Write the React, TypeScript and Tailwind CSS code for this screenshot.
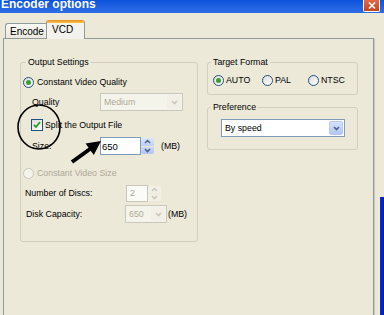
import React from 'react'

const Chevron = ({ color = '#4D6185' }: { color?: string }) => (
  <svg width="7" height="5" viewBox="0 0 7 5">
    <path d="M1 1l2.5 2.5L6 1" fill="none" stroke={color} strokeWidth="1.6" />
  </svg>
)

const ChevronUp = ({ color = '#4D6185' }: { color?: string }) => (
  <svg width="7" height="5" viewBox="0 0 7 5">
    <path d="M1 4l2.5-2.5L6 4" fill="none" stroke={color} strokeWidth="1.5" />
  </svg>
)

const Radio = ({ checked = false, disabled = false }: { checked?: boolean; disabled?: boolean }) => (
  <span
    className={
      disabled
        ? 'flex h-[11px] w-[11px] shrink-0 items-center justify-center rounded-full border border-[#CAC8BB] bg-[#F4F3EC]'
        : 'flex h-[11px] w-[11px] shrink-0 items-center justify-center rounded-full border border-[#1C5180] bg-gradient-to-br from-[#DCDCD7] to-white'
    }
  >
    {checked && <span className="h-[5px] w-[5px] rounded-full bg-[#3CA02E]" />}
  </span>
)

const Combo = ({ value, width, disabled = false }: { value: string; width: string; disabled?: boolean }) => (
  <div
    className={
      disabled
        ? `flex h-[18px] ${width} items-center border border-[#C9C7BA] bg-[#F5F4EA] text-[#ACA899]`
        : `flex h-[18px] ${width} items-center border border-[#7F9DB9] bg-white text-black`
    }
  >
    <span className="flex-1 pl-[3px]">{value}</span>
    <span
      className={
        disabled
          ? 'mr-px flex h-[14px] w-[14px] items-center justify-center rounded-[2px] bg-[#F1EFE6]'
          : 'mr-px flex h-[14px] w-[14px] items-center justify-center rounded-[2px] border border-[#B9CBF3] bg-gradient-to-b from-[#D6E2FD] to-[#B2C6F5]'
      }
    >
      <Chevron color={disabled ? '#C9C7BA' : '#4D6185'} />
    </span>
  </div>
)

const Spin = ({ disabled = false, h }: { disabled?: boolean; h: string }) => (
  <div className={`flex ${h} w-[13px] flex-col gap-px py-px`}>
    <span
      className={
        disabled
          ? 'flex flex-1 items-center justify-center rounded-t-[2px] bg-[#F1EFE6]'
          : 'flex flex-1 items-center justify-center rounded-t-[2px] bg-gradient-to-b from-[#DCE6FD] to-[#BCCEF7]'
      }
    >
      <ChevronUp color={disabled ? '#CAC8BB' : '#4D6185'} />
    </span>
    <span
      className={
        disabled
          ? 'flex flex-1 items-center justify-center rounded-b-[2px] bg-[#F1EFE6]'
          : 'flex flex-1 items-center justify-center rounded-b-[2px] bg-gradient-to-b from-[#CBD9FB] to-[#AFC4F4]'
      }
    >
      <Chevron color={disabled ? '#CAC8BB' : '#4D6185'} />
    </span>
  </div>
)

export default function App() {
  return (
    <div className="relative flex h-[315px] w-[384px] flex-col overflow-hidden bg-[#ECE9D8] font-['Liberation_Sans',Arial,sans-serif] text-[8.8px] leading-[11px] text-black">
      {/* title bar */}
      <div className="flex h-[13px] shrink-0 items-start justify-between bg-gradient-to-b from-[#0A53DA] to-[#2F6DE6]">
        <span className="-mt-[3px] pl-[1px] text-[12px] font-bold leading-[14px] text-white">Encoder options</span>
        <span className="mr-[4px] flex h-[12px] w-[17px] items-center justify-center rounded-b-[2px] border-x border-b border-white bg-gradient-to-b from-[#E06A45] to-[#C8431F]">
          <svg width="8" height="7" viewBox="0 0 8 7">
            <path d="M1 0.5l6 6M7 0.5l-6 6" stroke="white" strokeWidth="1.6" />
          </svg>
        </span>
      </div>

      <div className="flex flex-1">
        <div className="flex-1">
          {/* tabs */}
          <div className="flex items-end pl-[5px] pt-[7px]">
            <div className="flex h-[15px] w-[41px] items-center rounded-tl-[3px] border-l border-t border-[#919B9C] bg-gradient-to-b from-[#FAFAF7] to-[#EAE8DE] pl-[4px] text-[10px]">
              Encode
            </div>
            <div className="relative z-10 -mb-px flex h-[19px] w-[39px] flex-col rounded-t-[3px] border-x border-[#919B9C] bg-[#F3F2EC]">
              <span className="h-[3px] rounded-t-[2px] bg-gradient-to-b from-[#E68B2C] to-[#FFC73C]" />
              <span className="pl-[5px] pt-[1px] text-[10px]">VCD</span>
            </div>
          </div>

          {/* panel */}
          <div className="ml-[3px] flex h-[300px] w-[371px] items-start border border-[#919B9C] bg-[#ECE9D8] pl-[16px] pt-[18px] shadow-[1px_0_0_#C9C6B8]">
            <fieldset className="w-[178px] rounded-[3px] border border-[#D0D0BF] pb-[18px]">
              <legend className="ml-[5px] px-[2px]">Output Settings</legend>
              <div className="mt-[8px] flex h-[12px] items-center pl-[2px]">
                <Radio checked />
                <span className="ml-[3px]">Constant Video Quality</span>
              </div>
              <div className="mt-[5px] flex items-center pl-[11px]">
                <span className="w-[68px]">Quality</span>
                <Combo value="Medium" width="w-[83px]" disabled />
              </div>
              <div className="mt-[8px] flex h-[12px] items-center pl-[10px]">
                <span className="flex h-[12px] w-[12px] items-center justify-center border border-[#1C5180] bg-gradient-to-br from-[#DCDCD7] to-white">
                  <svg width="8" height="8" viewBox="0 0 8 8">
                    <path d="M1 4l2 2 4-5" fill="none" stroke="#21A121" strokeWidth="1.8" />
                  </svg>
                </span>
                <span className="ml-[2px]">Split the Output File</span>
              </div>
              <div className="mt-[6px] flex items-center pl-[11px]">
                <span className="w-[68px]">Size:</span>
                <div className="flex h-[18px] w-[41px] items-center border border-[#7F9DB9] bg-white pl-[1px] text-[9.5px]">650</div>
                <Spin h="h-[18px]" />
                <span className="ml-[7px]">(MB)</span>
              </div>
              <div className="mt-[12px] flex h-[12px] items-center pl-[2px] text-[#ACA899]">
                <Radio disabled />
                <span className="ml-[3px]">Constant Video Size</span>
              </div>
              <div className="mt-[6px] flex items-center pl-[4px]">
                <span className="w-[101px]">Number of Discs:</span>
                <div className="flex h-[17px] w-[22px] items-center border border-[#C9C7BA] bg-[#FBFBF8] pl-[3px] text-[#ACA899]">2</div>
                <Spin h="h-[17px]" disabled />
              </div>
              <div className="mt-[3px] flex items-center pl-[5px]">
                <span className="w-[99px]">Disk Capacity:</span>
                <Combo value="650" width="w-[42px]" disabled />
                <span className="ml-[1px]">(MB)</span>
              </div>
            </fieldset>

            <div className="ml-[9px] flex w-[151px] flex-col">
              <fieldset className="rounded-[3px] border border-[#D0D0BF] pb-[8px]">
                <legend className="ml-[3px] px-[2px]">Target Format</legend>
                <div className="mt-[6px] flex h-[12px] items-center pl-[5px]">
                  <span className="flex w-[49px] items-center">
                    <Radio checked />
                    <span className="ml-[2px]">AUTO</span>
                  </span>
                  <span className="flex w-[46px] items-center">
                    <Radio />
                    <span className="ml-[2px]">PAL</span>
                  </span>
                  <span className="flex items-center">
                    <Radio />
                    <span className="ml-[2px]">NTSC</span>
                  </span>
                </div>
              </fieldset>
              <fieldset className="mt-[7px] rounded-[3px] border border-[#D0D0BF] pb-[12px]">
                <legend className="ml-[3px] px-[2px]">Preference</legend>
                <div className="mt-[6px] pl-[13px]">
                  <Combo value="By speed" width="w-[124px]" />
                </div>
              </fieldset>
            </div>
          </div>
        </div>
        <div className="mt-[184px] w-[4px] bg-gradient-to-r from-[#0831D9] to-[#0019A8]" />
      </div>

      {/* hand-drawn annotations */}
      <svg className="pointer-events-none absolute left-0 top-0" width="384" height="315">
        <ellipse cx="39" cy="127" rx="21" ry="22" fill="none" stroke="black" strokeWidth="1.6" />
        <path d="M72 162L90 149" stroke="black" strokeWidth="4" />
        <path d="M101 141L85.6 143.6L93.8 155Z" fill="black" />
      </svg>
    </div>
  )
}
